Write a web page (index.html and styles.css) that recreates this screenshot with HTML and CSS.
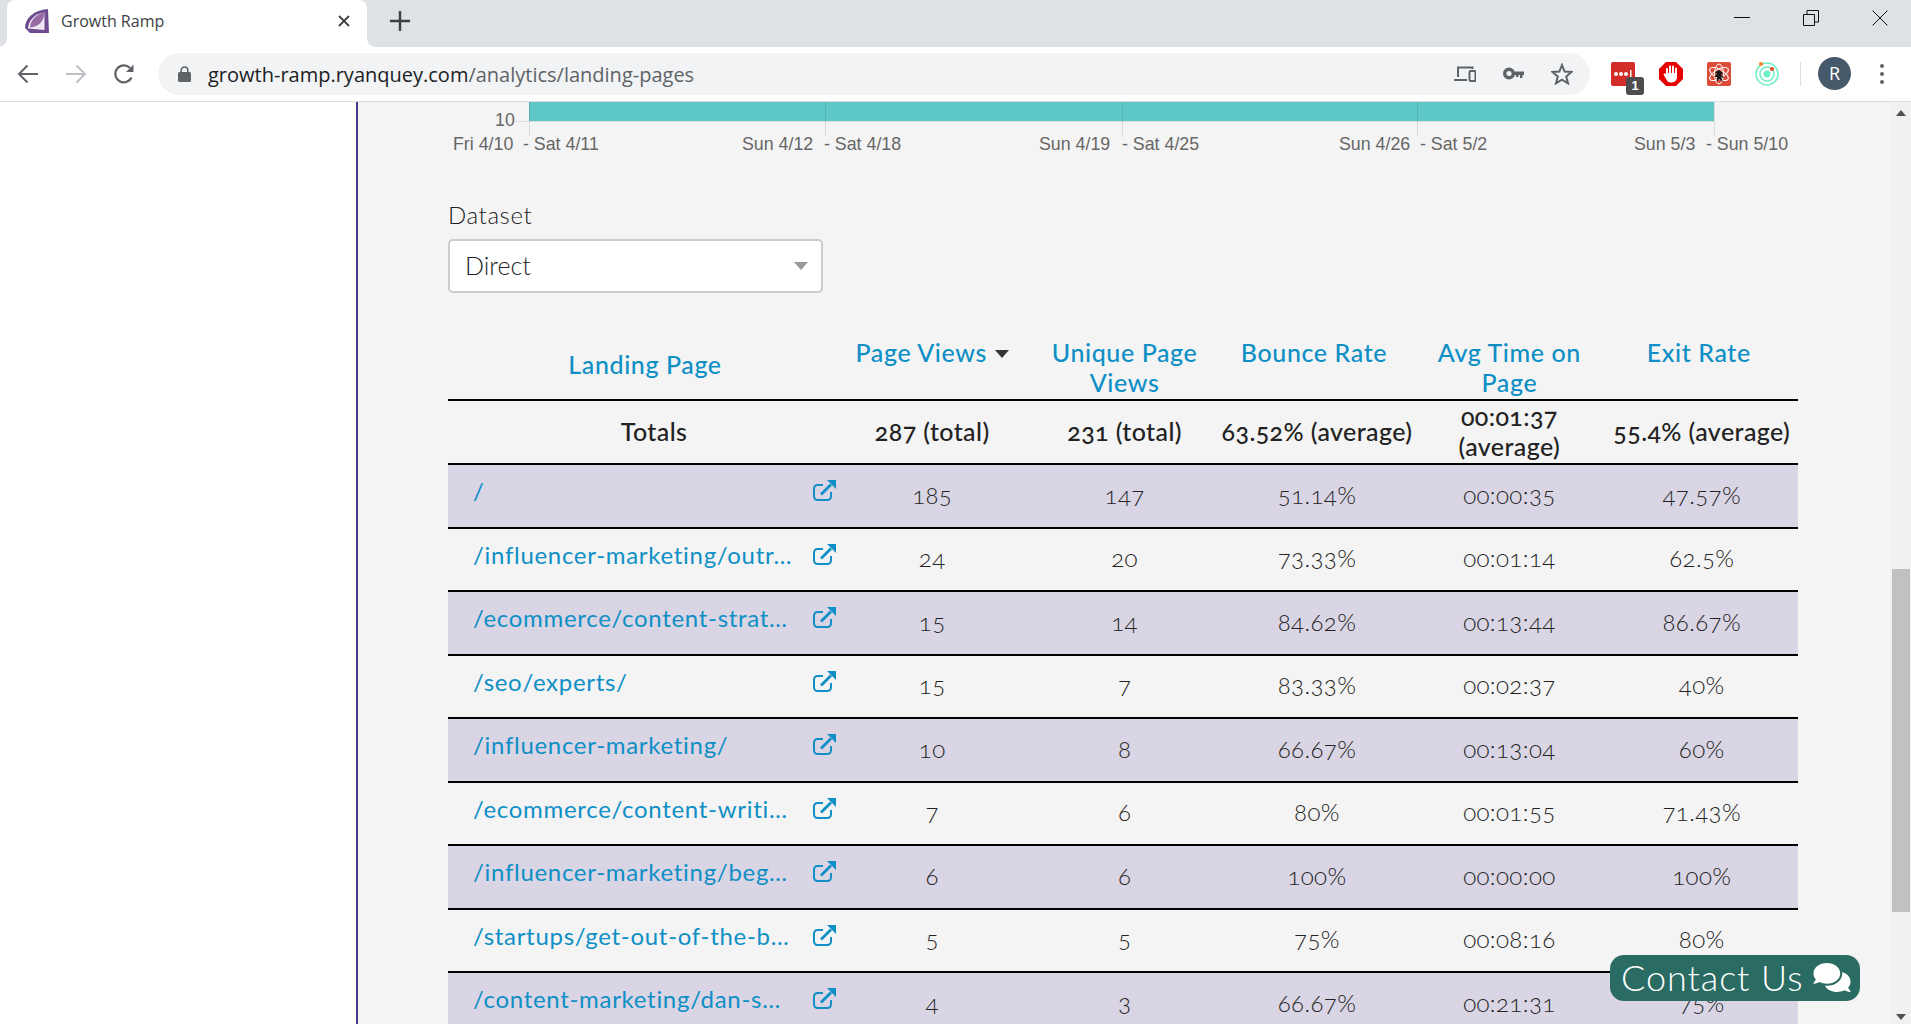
FILE: index.html
```html
<!DOCTYPE html>
<html lang="en">
<head>
<meta charset="utf-8">
<title>Growth Ramp</title>
<link rel="stylesheet" href="styles.css">
</head>
<body>
<div class="tabstrip">
  <div class="tab">
    <svg class="favicon" viewBox="0 0 24 24"><path d="M23 0 24 24H5L0 19C0 9 9 1 23 0Z" fill="#6e4b90"/><path d="M19.500 3.500C10 4.500 3.500 11 3 19.500L19.500 21Z" fill="#efe8f2"/><path d="M19.500 3.500C12 5 5.500 10 5 18.500 13 18 19 13 19.500 3.500Z" fill="#966ca3"/></svg>
    <span class="tab-title">Growth Ramp</span>
    <svg class="tab-close" viewBox="0 0 12 12"><path d="M1 1 11 11M11 1 1 11" stroke="#3c4043" stroke-width="1.8" fill="none"/></svg>
  </div>
  <svg class="new-tab" viewBox="0 0 18 18"><path d="M9 0V18M0 9H18" stroke="#3c4043" stroke-width="2.2" fill="none"/></svg>
  <div class="win-controls">
    <svg class="win-btn" viewBox="0 0 16 16"><path d="M0 7.5H16" stroke="#111" fill="none"/></svg>
    <svg class="win-btn" viewBox="0 0 16 16"><path d="M.5 4.5H11.5V15.5H.5ZM4 4.500V.5H15.500V12H11.500" stroke="#111" fill="none"/></svg>
    <svg class="win-btn" viewBox="0 0 16 16"><path d="M.5 .5 15.500 15.500M15.500 .5 .5 15.500" stroke="#111" fill="none"/></svg>
  </div>
</div>
<div class="toolbar">
  <div class="nav-btn"><svg viewBox="0 0 22 20" class="nav-icon"><path d="M21 10H2M10.500 1.500 2 10l8.500 8.500" stroke="#5f6368" stroke-width="2" fill="none"/></svg></div>
  <div class="nav-btn"><svg viewBox="0 0 22 20" class="nav-icon"><path d="M1 10H20M11.500 1.500 20 10l-8.500 8.500" stroke="#bdc1c6" stroke-width="2" fill="none"/></svg></div>
  <div class="nav-btn"><svg viewBox="0 0 22 22" class="nav-icon"><path d="M18.500 14.500A8.500 8.500 0 1 1 17 5" stroke="#5f6368" stroke-width="2.200" fill="none"/><path d="M20.500 1.500V9H13Z" fill="#5f6368"/></svg></div>
  <div class="omnibox">
    <svg class="lock" viewBox="0 0 13 16"><path d="M3.200 7V4.300a3.300 3.300 0 0 1 6.600 0V7" stroke="#5f6368" stroke-width="1.600" fill="none"/><rect y="6" width="13" height="10" rx="1.500" fill="#5f6368"/></svg>
    <span class="url"><span class="host">growth-ramp.ryanquey.com</span>/analytics/landing-pages</span>
    <div class="omni-icons">
      <svg class="omni-devices" viewBox="0 0 22 16"><path d="M4 11V1.500H18.500V3M0 14H13" stroke="#5f6368" stroke-width="2" fill="none"/><rect x="15.500" y="5" width="6" height="10" rx="1" stroke="#5f6368" stroke-width="2" fill="none"/></svg>
      <svg class="omni-key" viewBox="0 0 21 13"><circle cx="6" cy="6.500" r="4.300" stroke="#5f6368" stroke-width="3.400" fill="none"/><path d="M11 4.500H21V8H19.500V11H17V8H15.500V10H13V8H11Z" fill="#5f6368"/></svg>
      <svg class="omni-star" viewBox="0 0 22 22"><path d="M11 2 13.600 8.500 20.500 9 15.200 13.500 17 20.300 11 16.600 5 20.300 6.800 13.500 1.500 9 8.400 8.500Z" stroke="#5f6368" stroke-width="2" fill="none"/></svg>
    </div>
  </div>
  <div class="ext">
    <svg class="ext-icon" viewBox="0 0 24 24"><rect width="24" height="24" rx="2" fill="#d32d27"/><circle cx="5" cy="12" r="2" fill="#fff"/><circle cx="10" cy="12" r="2" fill="#fff"/><circle cx="15" cy="12" r="2" fill="#fff"/><rect x="19" y="8" width="1.500" height="8" fill="#fff"/></svg>
    <span class="ext-badge">1</span>
  </div>
  <div class="ext">
    <svg class="ext-icon" viewBox="0 0 24 24"><path d="M7 0H17L24 7V17L17 24H7L0 17V7Z" fill="#e60000"/><path d="M8 12V7M11 11V4.500M14 11V4.500M17 12V6.500" stroke="#fff" stroke-width="2" stroke-linecap="round" fill="none"/><path d="M7 11H18V15C18 19 15 20.500 12 20.500 9 20.500 8 19 6.500 16L4.800 13C4.200 11.500 6 10.500 7 12Z" fill="#fff"/></svg>
  </div>
  <div class="ext">
    <svg class="ext-icon" viewBox="0 0 24 24"><rect width="24" height="24" rx="2" fill="#dd4b39"/><ellipse cx="12" cy="12" rx="10.500" ry="4.500" stroke="#fff" fill="none" transform="rotate(30 12 12)"/><ellipse cx="12" cy="12" rx="10.500" ry="4.500" stroke="#fff" fill="none" transform="rotate(-30 12 12)"/><ellipse cx="12" cy="12" rx="4.500" ry="10" stroke="#fff" fill="none"/><path d="M12 8 16 11 14 13 18 16 14 15 16 20 12 17 10 20 10 15 7 15 10 12 8 10Z" fill="#1a1a1a"/></svg>
  </div>
  <div class="ext">
    <svg class="ext-icon" viewBox="0 0 24 24"><circle cx="12" cy="12" r="11" stroke="#6ef0c0" stroke-width="1.500" fill="none"/><circle cx="12" cy="12" r="7" stroke="#6ef0c0" stroke-width="1.500" fill="none"/><circle cx="12" cy="12" r="3.500" fill="#6ef0c0"/><circle cx="6" cy="2" r="2" fill="#f5822a"/><circle cx="17" cy="7" r="2" fill="#e8452c"/></svg>
  </div>
  <div class="tb-divider"></div>
  <div class="avatar">R</div>
  <div class="dots"><i></i><i></i><i></i></div>
</div>
<div class="page">
  <aside class="sidebar"></aside>
  <main class="main">
    <svg class="chart" viewBox="358 102 1532 54">
      <rect x="529" y="102" width="1185" height="19" fill="#5ec7c7"/>
      <path d="M515 121.500H1714" stroke="#ddd"/>
      <path d="M529.500 102V136M825.500 102V136M1122.500 102V136M1417.500 102V136M1714.500 102V136" stroke="#000" stroke-opacity=".1"/>
      <text class="chart-label" x="495" y="126">10</text>
      <text class="chart-label" x="453" y="150">Fri 4/10</text>
      <text class="chart-label" x="523" y="150">- Sat 4/11</text>
      <text class="chart-label" x="742" y="150">Sun 4/12</text>
      <text class="chart-label" x="824" y="150">- Sat 4/18</text>
      <text class="chart-label" x="1039" y="150">Sun 4/19</text>
      <text class="chart-label" x="1122" y="150">- Sat 4/25</text>
      <text class="chart-label" x="1339" y="150">Sun 4/26</text>
      <text class="chart-label" x="1420" y="150">- Sat 5/2</text>
      <text class="chart-label" x="1634" y="150">Sun 5/3</text>
      <text class="chart-label" x="1706" y="150">- Sun 5/10</text>
    </svg>
    <div class="content">
      <label class="field-label">Dataset</label>
      <div class="select"><span>Direct</span><i class="select-caret"></i></div>
      <table class="report">
        <colgroup><col class="col-page"><col class="col-num"><col class="col-num"><col class="col-num"><col class="col-num"><col class="col-num"></colgroup>
        <thead>
          <tr>
            <th class="th-landing"><a>Landing Page</a></th>
            <th><a>Page Views</a> <i class="sort-caret"></i></th>
            <th><a>Unique Page Views</a></th>
            <th class="th-shift"><a>Bounce Rate</a></th>
            <th><a>Avg Time on Page</a></th>
            <th class="th-shift"><a>Exit Rate</a></th>
          </tr>
        </thead>
        <tbody>
          <tr class="totals"><td class="totals-label">Totals</td><td>287 (total)</td><td>231 (total)</td><td>63.52% (average)</td><td>00:01:37 (average)</td><td>55.4% (average)</td></tr>
          <tr class="alt"><td><div class="page-cell"><a class="page-link">/</a><svg class="ext-link" viewBox="0 0 23 21"><use href="#extlink"/></svg></div></td><td>185</td><td>147</td><td>51.14%</td><td>00:00:35</td><td>47.57%</td></tr>
          <tr><td><div class="page-cell"><a class="page-link">/influencer-marketing/outr…</a><svg class="ext-link" viewBox="0 0 23 21"><use href="#extlink"/></svg></div></td><td>24</td><td>20</td><td>73.33%</td><td>00:01:14</td><td>62.5%</td></tr>
          <tr class="alt"><td><div class="page-cell"><a class="page-link">/ecommerce/content-strat…</a><svg class="ext-link" viewBox="0 0 23 21"><use href="#extlink"/></svg></div></td><td>15</td><td>14</td><td>84.62%</td><td>00:13:44</td><td>86.67%</td></tr>
          <tr><td><div class="page-cell"><a class="page-link">/seo/experts/</a><svg class="ext-link" viewBox="0 0 23 21"><use href="#extlink"/></svg></div></td><td>15</td><td>7</td><td>83.33%</td><td>00:02:37</td><td>40%</td></tr>
          <tr class="alt"><td><div class="page-cell"><a class="page-link">/influencer-marketing/</a><svg class="ext-link" viewBox="0 0 23 21"><use href="#extlink"/></svg></div></td><td>10</td><td>8</td><td>66.67%</td><td>00:13:04</td><td>60%</td></tr>
          <tr><td><div class="page-cell"><a class="page-link">/ecommerce/content-writi…</a><svg class="ext-link" viewBox="0 0 23 21"><use href="#extlink"/></svg></div></td><td>7</td><td>6</td><td>80%</td><td>00:01:55</td><td>71.43%</td></tr>
          <tr class="alt"><td><div class="page-cell"><a class="page-link">/influencer-marketing/beg…</a><svg class="ext-link" viewBox="0 0 23 21"><use href="#extlink"/></svg></div></td><td>6</td><td>6</td><td>100%</td><td>00:00:00</td><td>100%</td></tr>
          <tr><td><div class="page-cell"><a class="page-link">/startups/get-out-of-the-b…</a><svg class="ext-link" viewBox="0 0 23 21"><use href="#extlink"/></svg></div></td><td>5</td><td>5</td><td>75%</td><td>00:08:16</td><td>80%</td></tr>
          <tr class="alt"><td><div class="page-cell"><a class="page-link">/content-marketing/dan-s…</a><svg class="ext-link" viewBox="0 0 23 21"><use href="#extlink"/></svg></div></td><td>4</td><td>3</td><td>66.67%</td><td>00:21:31</td><td>75%</td></tr>
        </tbody>
      </table>
    </div>
  </main>
  <div class="scrollbar">
    <i class="arrow-up"></i>
    <div class="scroll-track"><div class="scroll-thumb"></div></div>
    <i class="arrow-down"></i>
  </div>
  <a class="contact">Contact Us <svg class="contact-icon" viewBox="0 0 576 512"><path d="M416 192c0-88.400-93.100-160-208-160S0 103.600 0 192c0 34.300 14.100 65.900 38 92-13.400 30.200-35.500 54.200-35.800 54.500-2.200 2.300-2.800 5.700-1.500 8.700S4.800 352 8 352c36.600 0 66.900-12.300 88.700-25 32.200 15.700 70.300 25 111.300 25 114.900 0 208-71.600 208-160zm122 220c23.900-26 38-57.700 38-92 0-66.900-53.500-124.200-129.300-148.100.9 6.600 1.300 13.300 1.300 20.100 0 105.900-107.700 192-240 192-10.800 0-21.300-.8-31.700-1.900C207.800 439.600 281.800 480 368 480c41 0 79.100-9.200 111.300-25 21.800 12.700 52.100 25 88.700 25 3.200 0 6.100-1.900 7.300-4.800 1.300-2.900.7-6.300-1.500-8.700-.3-.3-22.400-24.200-35.800-54.500z" fill="#fff"/></svg></a>
</div>
<svg class="defs" width="0" height="0"><defs><g id="extlink"><path d="M10 5H4.500A3.500 3.500 0 0 0 1 8.500V16.500A3.500 3.500 0 0 0 4.500 20H14.500A3.500 3.500 0 0 0 18 16.500V12" stroke="#1190c8" stroke-width="2" fill="none"/><path d="M8 14.500 18 4.500" stroke="#1190c8" stroke-width="2.800" fill="none"/><path d="M14 0H23V9Z" fill="#1190c8"/></g></defs></svg>
</body>
</html>
```

FILE: styles.css
```css
* { box-sizing: border-box; }
html, body { margin: 0; height: 100%; overflow: hidden; background: #fff; }
body { width: 1911px; height: 1024px; display: flex; flex-direction: column; }

/* browser chrome */
.tabstrip { height: 47px; flex: none; background: #dee1e6; display: flex; align-items: flex-start; }
.tab { position: relative; width: 360px; height: 47px; margin-left: 7px; padding-left: 18px; background: #fff; border-radius: 8px 8px 0 0; display: flex; align-items: center; }
.tab::before, .tab::after { content: ""; position: absolute; bottom: 0; width: 8px; height: 8px; }
.tab::before { left: -8px; background: radial-gradient(circle at 0 0, #dee1e6 7.500px, #fff 8px); }
.tab::after { right: -8px; background: radial-gradient(circle at 100% 0, #dee1e6 7.500px, #fff 8px); }
.favicon { width: 24px; height: 24px; margin-top: -5px; flex: none; }
.tab-title { margin-left: 12px; margin-top: -5px; font: 16px "Open Sans", sans-serif; color: #3c4043; }
.tab-close { position: absolute; left: 331px; top: 15px; width: 12px; height: 12px; }
.new-tab { width: 20px; height: 20px; margin: 11px 0 0 23px; flex: none; }
.win-controls { margin-left: auto; display: flex; gap: 53px; padding: 10px 23px 0 0; }
.win-btn { width: 16px; height: 16px; }

.toolbar { height: 55px; flex: none; background: #fff; border-bottom: 1px solid #dadce0; display: flex; align-items: center; padding: 0 0 1px 4px; }
.nav-btn { width: 48px; height: 48px; display: flex; align-items: center; justify-content: center; flex: none; }
.nav-icon { width: 22px; height: 22px; }
.omnibox { width: 1432px; height: 42px; margin: 0 9px 0 10px; background: #f1f3f4; border-radius: 21px; display: flex; align-items: center; padding-left: 20px; flex: none; }
.lock { width: 13px; height: 16px; flex: none; }
.url { margin: 1px 0 0 17px; font: 20px "Open Sans", sans-serif; color: #5f6368; letter-spacing: 0; white-space: nowrap; }
.host { color: #202124; }
.omni-icons { margin-left: auto; display: flex; align-items: center; gap: 27px; padding-right: 17px; }
.omni-devices { width: 22px; height: 16px; }
.omni-key { width: 21px; height: 13px; }
.omni-star { width: 22px; height: 22px; }
.ext { position: relative; width: 48px; height: 48px; display: flex; align-items: center; justify-content: center; flex: none; }
.ext-icon { width: 24px; height: 24px; }
.ext-badge { position: absolute; left: 27px; top: 27px; width: 18px; height: 18px; background: #4d4d4d; border-radius: 3px; color: #fff; font: bold 13px/18px "Liberation Sans", sans-serif; text-align: center; }
.tb-divider { width: 1px; height: 24px; margin-left: 9px; background: #dadce0; flex: none; }
.avatar { width: 33px; height: 33px; margin-left: 17px; border-radius: 50%; background: #45596a; color: #fff; font: 18px/33px "Open Sans", sans-serif; text-align: center; flex: none; }
.dots { margin-left: 29px; display: flex; flex-direction: column; gap: 4px; }
.dots i { display: block; width: 4px; height: 4px; border-radius: 50%; background: #5f6368; }

/* page */
.page { flex: 1; min-height: 0; display: flex; position: relative; overflow: hidden; }
.sidebar { width: 358px; flex: none; background: #fff; border-right: 2px solid #43388a; }
.main { flex: 1; min-width: 0; background: #f4f4f4; overflow: hidden; }
.chart { display: block; width: 1532px; height: 54px; }
.chart-label { font: 17.800px "Liberation Sans", sans-serif; fill: #666; }
.content { padding: 0 92px 0 90px; font-family: Lato, sans-serif; color: #222; }
.field-label { display: block; margin-top: 44px; font-size: 24px; font-weight: 300; line-height: 30px; color: #222; letter-spacing: .6px; }
.select { width: 375px; height: 54px; margin-top: 9px; background: #fff; border: 2px solid #ccc; border-radius: 5px; padding: 0 13px 2px 15px; display: flex; align-items: center; justify-content: space-between; font-size: 25px; font-weight: 300; }
.select-caret { width: 0; height: 0; border: 7.500px solid transparent; border-top: 8px solid #999; border-bottom: 0; margin-top: 2px; }

.report { width: 1350px; margin-top: 44px; border-collapse: collapse; table-layout: fixed; font-size: 24px; line-height: 30px; font-variant-numeric: oldstyle-nums; }
.col-page { width: 388px; }
.col-num { width: 192.400px; }
.report a { color: #0e8fc6; }
.report th { padding: 0; height: 63px; border-bottom: 2px solid #000; font-size: 25px; font-weight: 500; vertical-align: top; text-align: center; letter-spacing: .6px; }
.report th.th-landing { vertical-align: middle; padding: 0 0 9px 6px; }
.report th.th-shift { padding-right: 6px; }
.sort-caret { display: inline-block; width: 0; height: 0; margin-left: 1px; vertical-align: 4px; border: 7px solid transparent; border-top: 8px solid #333; border-bottom: 0; }
.report td { padding: 0 0 2px; height: 63.500px; border-bottom: 2px solid #000; text-align: center; font-weight: 300; letter-spacing: .4px; }
.report tr.totals td { font-size: 25px; font-weight: 500; padding: 0 0 2px; }
.report tr.totals td.totals-label { padding-left: 24px; }
.report tr.alt td { background: #d9d5e4; }
.report td .page-cell { display: flex; justify-content: space-between; align-items: flex-start; padding-left: 25px; height: 57px; }
.page-link { font-weight: 400; margin-top: 10px; white-space: nowrap; letter-spacing: .7px; }
.ext-link { width: 23px; height: 21px; margin-top: 14px; flex: none; }

.scrollbar { width: 21px; flex: none; background: #f1f1f1; display: flex; flex-direction: column; align-items: center; }
.arrow-up { flex: none; margin: 8px 0 0; width: 0; height: 0; border: 5.500px solid transparent; border-bottom: 6px solid #505050; border-top: 0; }
.arrow-down { flex: none; margin: 0 0 4px; width: 0; height: 0; border: 5.500px solid transparent; border-top: 6px solid #505050; border-bottom: 0; }
.scroll-track { flex: 1; width: 100%; padding-top: 453px; padding-left: 2px; }
.scroll-thumb { height: 343px; width: 18px; background: #c1c1c1; }

.contact { position: absolute; left: 1610px; top: 853px; width: 250px; height: 46px; background: #2a6b63; border-radius: 14px; color: #fff; font: 300 36px/46px Lato, sans-serif; padding: 0 0 2px 11px; white-space: nowrap; display: flex; align-items: center; gap: 9px; letter-spacing: .95px; }
.contact-icon { width: 38px; height: 33px; flex: none; }
.defs { position: absolute; }
```
